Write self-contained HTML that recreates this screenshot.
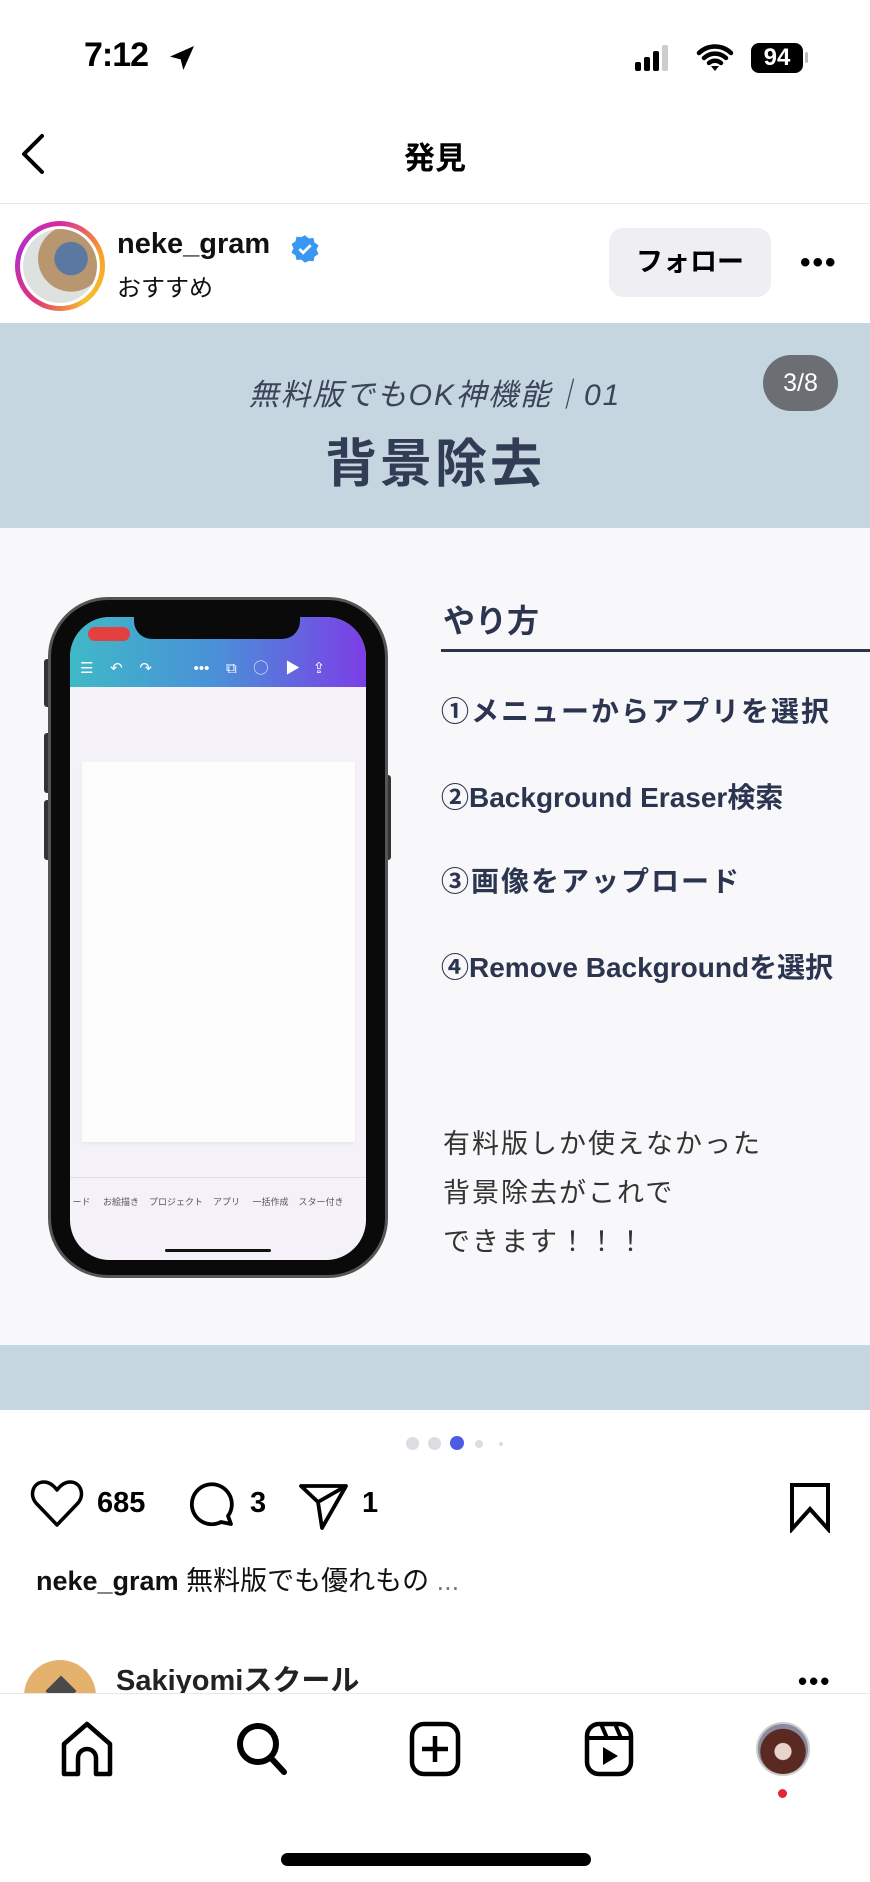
<!DOCTYPE html>
<html><head><meta charset="utf-8"><style>
*{margin:0;padding:0;box-sizing:border-box}
body{width:870px;height:1882px;background:#fff;position:relative;overflow:hidden;font-family:"Liberation Sans","Noto Sans CJK JP",sans-serif;color:#000}
.a{position:absolute}
.nv{color:#2b3550}
</style></head><body>
<!-- status bar -->
<div class="a" style="left:84px;top:36px;font-size:34px;font-weight:600;letter-spacing:-1px">7:12</div>
<svg class="a" style="left:166px;top:42px" width="32" height="32" viewBox="0 0 24 24"><path d="M21 3 3 11l8 2 2 8z" fill="#000"/></svg>
<svg class="a" style="left:635px;top:44px" width="46" height="28"><rect x="0" y="18" width="6" height="9" rx="2"/><rect x="9" y="13" width="6" height="14" rx="2"/><rect x="18" y="7" width="6" height="20" rx="2"/><rect x="27" y="1" width="6" height="26" rx="2" fill="#ccc"/></svg>
<svg class="a" style="left:696px;top:42px" width="38" height="30" viewBox="0 0 38 30"><path d="M3 11a23 23 0 0 1 32 0M8 16a16 16 0 0 1 22 0M13 21a9 9 0 0 1 12 0" stroke="#000" stroke-width="4.5" fill="none" stroke-linecap="round"/><path d="M15 24l4 5 4-5z"/></svg>
<div class="a" style="left:751px;top:43px;width:52px;height:30px;background:#000;border-radius:8px;color:#fff;font-size:24px;font-weight:700;text-align:center;line-height:30px">94</div>
<div class="a" style="left:805px;top:52px;width:3px;height:11px;background:#bbb;border-radius:2px"></div>
<!-- nav -->
<svg class="a" style="left:18px;top:132px" width="30" height="44"><path d="M24 4 6 22l18 18" stroke="#000" stroke-width="4" fill="none" stroke-linecap="round" stroke-linejoin="round"/></svg>
<div class="a" style="left:0;width:870px;top:133px;text-align:center;font-size:31px;font-weight:700">発見</div>
<div class="a" style="left:0;top:203px;width:870px;height:1px;background:#e6e6e6"></div>
<!-- profile -->
<div class="a" style="left:15px;top:221px;width:90px;height:90px;border-radius:50%;background:conic-gradient(#d62ba0,#f7a028,#f7c02b,#e0337a,#b52fc5,#d62ba0)"></div>
<div class="a" style="left:20px;top:226px;width:80px;height:80px;border-radius:50%;background:#fff"></div>
<div class="a" style="left:23px;top:229px;width:74px;height:74px;border-radius:50%;background:radial-gradient(circle at 65% 40%,#5a78a0 0 25%,#b89670 26% 50%,#dde2e0 51%)"></div>
<div class="a" style="left:117px;top:228px;font-size:29px;font-weight:600;color:#111">neke_gram</div>
<svg class="a" style="left:290px;top:234px" width="30" height="30" viewBox="0 0 24 24"><path d="M12 1l3 2.5 3.8-.3.8 3.7 3.2 2.1-1.6 3.5 1.6 3.5-3.2 2.1-.8 3.7-3.8-.3L12 23l-3-2.5-3.8.3-.8-3.7L1.2 15l1.6-3.5L1.2 8l3.2-2.1.8-3.7 3.8.3z" fill="#3897f0"/><path d="M7.5 12l3 3 6-6" stroke="#fff" stroke-width="2.2" fill="none"/></svg>
<div class="a" style="left:117px;top:268px;font-size:24px;color:#111">おすすめ</div>
<div class="a" style="left:609px;top:228px;width:162px;height:69px;background:#efeff3;border-radius:14px;text-align:center;line-height:69px;font-size:27px;font-weight:700">フォロー</div>
<div class="a" style="left:800px;top:246px;font-size:30px;font-weight:700;letter-spacing:2px">•••</div>
<!-- slide -->
<div class="a" style="left:0;top:323px;width:870px;height:205px;background:#c5d6e0"></div>
<div class="a nv" style="left:0;width:870px;top:370px;text-align:center;font-size:30px;letter-spacing:2px;font-style:italic;color:#3b4458">無料版でもOK神機能｜01</div>
<div class="a nv" style="left:0;width:870px;top:422px;text-align:center;font-size:52px;font-weight:700;letter-spacing:3px;color:#323c55">背景除去</div>
<div class="a" style="left:763px;top:355px;width:75px;height:56px;border-radius:28px;background:#6b6f73;color:#fff;font-size:25px;text-align:center;line-height:56px">3/8</div>
<div class="a" style="left:0;top:528px;width:870px;height:817px;background:#f8f8fa"></div>
<div class="a" style="left:0;top:1345px;width:870px;height:65px;background:#c5d6e0"></div>
<!-- phone -->
<div class="a" style="left:44px;top:659px;width:8px;height:48px;background:#333;border-radius:3px"></div>
<div class="a" style="left:44px;top:733px;width:8px;height:60px;background:#333;border-radius:3px"></div>
<div class="a" style="left:44px;top:800px;width:8px;height:60px;background:#333;border-radius:3px"></div>
<div class="a" style="left:384px;top:775px;width:7px;height:85px;background:#333;border-radius:3px"></div>
<div class="a" style="left:48px;top:597px;width:340px;height:681px;background:#0a0a0a;border-radius:60px;border:3px solid #555"></div>
<div class="a" style="left:70px;top:617px;width:296px;height:643px;background:#f4f2f8;border-radius:40px;overflow:hidden">
 <div style="height:70px;background:linear-gradient(90deg,#3fb9c7,#4a8fd8 50%,#7c3ee6)"></div>
 <div class="a" style="left:18px;top:10px;width:42px;height:14px;background:#e34040;border-radius:7px"></div>
 <div class="a" style="left:10px;top:40px;color:#fff;font-size:15px;white-space:nowrap">☰ &nbsp;&nbsp; ↶ &nbsp;&nbsp; ↷ &nbsp;&nbsp;&nbsp;&nbsp;&nbsp;&nbsp;&nbsp;&nbsp; ••• &nbsp;&nbsp; ⧉ &nbsp;&nbsp; ◯ &nbsp;&nbsp; ▶ &nbsp; ⇪</div>
 <div class="a" style="left:12px;top:145px;width:273px;height:380px;background:#fdfdfe;box-shadow:0 2px 4px rgba(0,0,0,.05)"></div>
 <div class="a" style="left:0;top:560px;width:296px;height:1px;background:#e0dfe6"></div>
 <div class="a" style="left:0;top:578px;width:296px;font-size:9px;color:#555;white-space:nowrap">&nbsp;ード &nbsp;&nbsp;&nbsp; お絵描き &nbsp;&nbsp; プロジェクト &nbsp;&nbsp; アプリ &nbsp;&nbsp;&nbsp; 一括作成 &nbsp;&nbsp; スター付き</div>
 <div class="a" style="left:95px;top:632px;width:106px;height:3px;background:#111;border-radius:2px"></div>
</div>
<div class="a" style="left:134px;top:617px;width:166px;height:22px;background:#0a0a0a;border-radius:0 0 18px 18px"></div>
<!-- right text -->
<div class="a nv" style="left:443px;top:596px;font-size:32px;font-weight:700">やり方</div>
<div class="a" style="left:441px;top:649px;width:429px;height:3px;background:#2b3550"></div>
<div class="a nv" style="left:441px;top:690px;font-size:28px;letter-spacing:2px;font-weight:600">①メニューからアプリを選択</div>
<div class="a nv" style="left:441px;top:776px;font-size:28px;font-weight:600">②Background Eraser検索</div>
<div class="a nv" style="left:441px;top:860px;font-size:28px;letter-spacing:2px;font-weight:600">③画像をアップロード</div>
<div class="a nv" style="left:441px;top:946px;font-size:28px;font-weight:600">④Remove Backgroundを選択</div>
<div class="a" style="left:443px;top:1120px;font-size:27px;line-height:49px;letter-spacing:2px;color:#333">有料版しか使えなかった<br>背景除去がこれで<br>できます！！！</div>
<!-- dots -->
<div class="a" style="left:406px;top:1437px;width:13px;height:13px;border-radius:50%;background:#dcdde2"></div>
<div class="a" style="left:428px;top:1437px;width:13px;height:13px;border-radius:50%;background:#dcdde2"></div>
<div class="a" style="left:450px;top:1436px;width:14px;height:14px;border-radius:50%;background:#4a5ce6"></div>
<div class="a" style="left:475px;top:1440px;width:8px;height:8px;border-radius:50%;background:#dcdde2"></div>
<div class="a" style="left:499px;top:1442px;width:4px;height:4px;border-radius:50%;background:#dcdde2"></div>
<!-- actions -->
<svg class="a" style="left:30px;top:1478px" width="54" height="50" viewBox="0 0 54 50"><path d="M27 47 6 25C-1 17 3 4 14 4c6 0 10 4 13 8 3-4 7-8 13-8 11 0 15 13 8 21z" stroke="#000" stroke-width="3.5" fill="none" stroke-linejoin="round"/></svg>
<div class="a" style="left:97px;top:1487px;font-size:29px;font-weight:600">685</div>
<svg class="a" style="left:187px;top:1480px" width="52" height="52" viewBox="0 0 52 52"><path d="M44 44 41 36A20 20 0 1 0 34 42z" stroke="#000" stroke-width="3.8" fill="none" stroke-linejoin="round"/></svg>
<div class="a" style="left:250px;top:1487px;font-size:29px;font-weight:600">3</div>
<svg class="a" style="left:298px;top:1480px" width="52" height="52" viewBox="0 0 52 52"><path d="M3 6h45L24 48 20 22zM20 22 48 6" stroke="#000" stroke-width="3.8" fill="none" stroke-linejoin="round"/></svg>
<div class="a" style="left:362px;top:1487px;font-size:29px;font-weight:600">1</div>
<svg class="a" style="left:788px;top:1481px" width="44" height="52" viewBox="0 0 44 52"><path d="M4 4h36v44L22 28 4 48z" stroke="#000" stroke-width="4" fill="none" stroke-linejoin="miter"/></svg>
<div class="a" style="left:36px;top:1559px;font-size:27px;color:#111"><b style="font-weight:600">neke_gram</b> 無料版でも優れもの <span style="color:#777">...</span></div>
<!-- next post -->
<div class="a" style="left:24px;top:1660px;width:72px;height:72px;border-radius:50%;background:#e5b26e"></div>
<div class="a" style="left:50px;top:1680px;width:22px;height:22px;background:#4a4a4a;transform:rotate(45deg)"></div>
<div class="a" style="left:116px;top:1657px;font-size:29px;font-weight:600;color:#222">Sakiyomiスクール</div>
<div class="a" style="left:798px;top:1666px;font-size:26px;font-weight:700;letter-spacing:2px">•••</div>
<div class="a" style="left:0;top:1693px;width:870px;height:189px;background:#fff;border-top:1px solid #e8e8e8"></div>
<!-- tab bar -->
<svg class="a" style="left:60px;top:1720px" width="54" height="58" viewBox="0 0 54 58"><path d="M4 54V24L27 4l23 20v30H36V38a9 9 0 0 0-18 0v16z" stroke="#000" stroke-width="4.5" fill="none" stroke-linejoin="round"/></svg>
<svg class="a" style="left:234px;top:1720px" width="56" height="58" viewBox="0 0 56 58"><circle cx="24" cy="24" r="18" stroke="#000" stroke-width="6" fill="none"/><path d="M37 38l13 14" stroke="#000" stroke-width="6" stroke-linecap="round"/></svg>
<svg class="a" style="left:408px;top:1720px" width="56" height="58" viewBox="0 0 56 58"><rect x="4" y="4" width="46" height="50" rx="12" stroke="#000" stroke-width="4.5" fill="none"/><path d="M27 16v26M14 29h26" stroke="#000" stroke-width="4.5"/></svg>
<svg class="a" style="left:583px;top:1720px" width="54" height="58" viewBox="0 0 54 58"><rect x="4" y="4" width="44" height="50" rx="12" stroke="#000" stroke-width="4.5" fill="none"/><path d="M4 18h44M18 4l6 14M32 4l6 14" stroke="#000" stroke-width="4"/><path d="M20 27v18l15-9z"/></svg>
<div class="a" style="left:756px;top:1722px;width:54px;height:54px;border-radius:50%;background:radial-gradient(circle at 50% 55%,#e8d4cc 0 22%,#5a2a22 24% 60%,#8a8aa0 62%);border:2px solid #ccc"></div>
<div class="a" style="left:778px;top:1789px;width:9px;height:9px;border-radius:50%;background:#e0263a"></div>
<div class="a" style="left:281px;top:1853px;width:310px;height:13px;border-radius:7px;background:#000"></div>
</body></html>
